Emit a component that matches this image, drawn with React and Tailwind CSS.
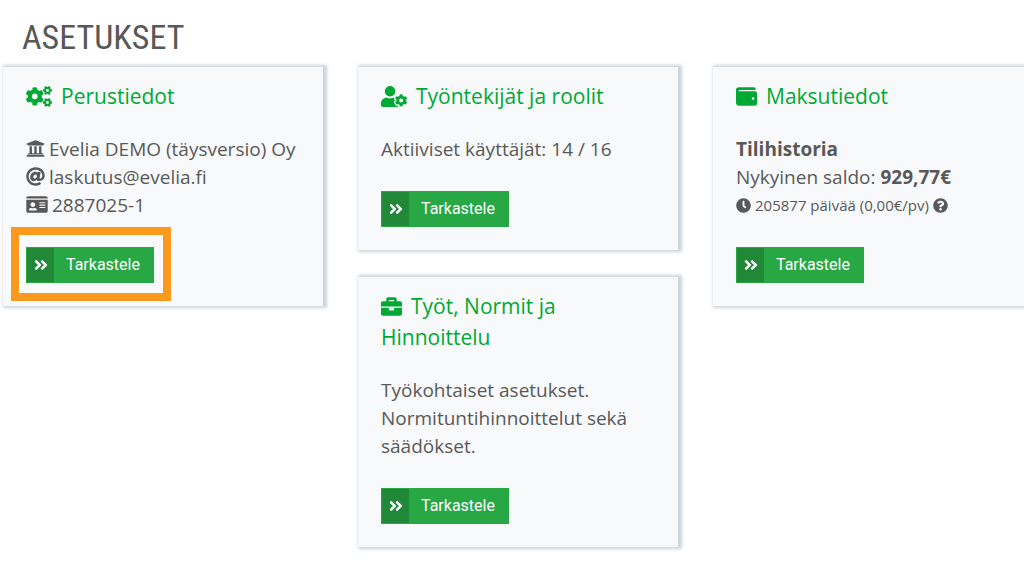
import React from "react";
import {
  FaAngleDoubleRight,
  FaAt,
  FaBriefcase,
  FaClock,
  FaCogs,
  FaIdCard,
  FaQuestionCircle,
  FaUniversity,
  FaUserCog,
  FaWallet,
} from "react-icons/fa";

const Card = ({ icon: Icon, iconClass, title, highlight, children }) => (
  <section className="bg-[#f8f9fb] px-[23px] pt-[14px] pb-[23px] shadow-[2px_0_3px_2px_#ced4da]">
    <h2 className="mb-[23px] text-[21px] leading-[31px] text-[#00a933]">
      <Icon className={`mr-[9px] inline align-[-3px] ${iconClass}`} />
      {title}
    </h2>
    <div className="mb-7 text-[19px] leading-7">{children}</div>
    <div className="relative w-fit">
      <button
        type="button"
        className="flex h-9 items-stretch border border-[#28a745] bg-[#28a745] font-['Roboto'] text-[16px] text-white"
      >
        <span className="flex w-[27px] items-center justify-center bg-[#218838]">
          <FaAngleDoubleRight className="size-4" />
        </span>
        <span className="flex items-center pr-[13px] pl-3">Tarkastele</span>
      </button>
      {highlight && (
        <div className="pointer-events-none absolute -top-5 -right-[17px] -bottom-[18px] -left-[15px] border-8 border-[#fb991c]" />
      )}
    </div>
  </section>
);

const App = () => {
  return (
    <div className="overflow-hidden pb-7 pl-[3px] font-['Open_Sans',sans-serif] text-[#585858]">
      <h1 className="pt-4 pb-[9px] pl-[19px] font-['Roboto_Condensed','Roboto',sans-serif] text-[34px] leading-[42px]">
        ASETUKSET
      </h1>
      <main className="-mr-[9px] grid grid-cols-3 items-start gap-[35px]">
        <Card icon={FaCogs} iconClass="h-[21px] w-[26px]" title="Perustiedot" highlight>
          <p>
            <FaUniversity className="mr-1 inline size-[19px] align-[-2px]" />
            Evelia DEMO (täysversio) Oy
          </p>
          <p>
            <FaAt className="mr-1 inline size-[19px] align-[-2px]" />
            laskutus@evelia.fi
          </p>
          <p>
            <FaIdCard className="mr-1 inline h-[19px] w-[22px] align-[-2px]" />
            2887025-1
          </p>
        </Card>

        <div className="flex flex-col gap-[27px]">
          <Card
            icon={FaUserCog}
            iconClass="h-[21px] w-[26px]"
            title="Työntekijät ja roolit"
          >
            <p>Aktiiviset käyttäjät: 14 / 16</p>
          </Card>
          <Card
            icon={FaBriefcase}
            iconClass="size-[21px]"
            title="Työt, Normit ja Hinnoittelu"
          >
            <p>Työkohtaiset asetukset. Normituntihinnoittelut sekä säädökset.</p>
          </Card>
        </div>

        <Card icon={FaWallet} iconClass="size-[21px]" title="Maksutiedot">
          <p className="font-bold">Tilihistoria</p>
          <p>
            Nykyinen saldo: <strong className="font-bold">929,77€</strong>
          </p>
          <p className="text-[15px]">
            <FaClock className="mr-1 inline align-[-2px]" />
            205877 päivää (0,00€/pv)
            <FaQuestionCircle className="ml-1 inline align-[-2px]" />
          </p>
        </Card>
      </main>
    </div>
  );
};

export default App;
